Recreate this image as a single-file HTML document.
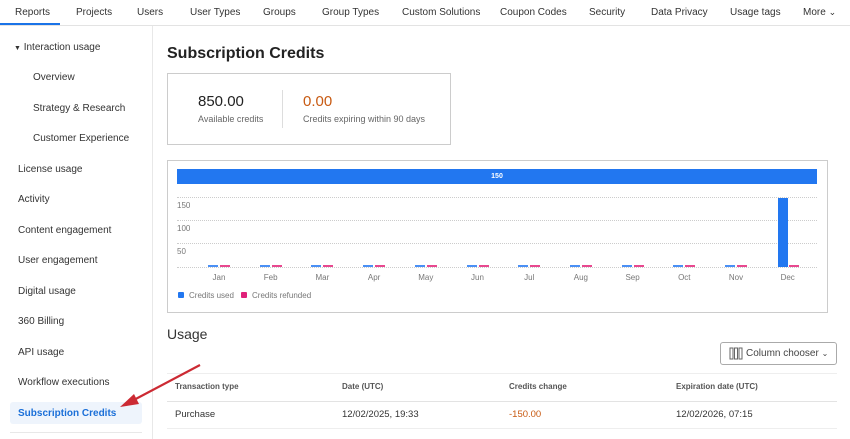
<!DOCTYPE html>
<html><head><style>
*{margin:0;padding:0;box-sizing:border-box}
body{width:850px;height:439px;overflow:hidden;font-family:"Liberation Sans",sans-serif;background:#fff;color:#333;position:relative}
.a{position:absolute;white-space:nowrap}
.nav{font-size:10px;color:#333;top:7px}
.side{font-size:10px;color:#333}
.m{font-size:8px;color:#777}
.dl{position:absolute;left:177px;width:640px;border-top:1px dotted #ccc}
.tb{position:absolute;height:2px;width:10px}
</style></head><body>
<div class="a" style="left:0;top:25px;width:850px;border-top:1px solid #e3e3e3"></div>
<div class="a" style="left:0;top:23px;width:60px;height:2px;background:#1a73e8"></div>
<div class="a nav" style="left:15px">Reports</div>
<div class="a nav" style="left:76px">Projects</div>
<div class="a nav" style="left:137px">Users</div>
<div class="a nav" style="left:190px">User Types</div>
<div class="a nav" style="left:263px">Groups</div>
<div class="a nav" style="left:322px">Group Types</div>
<div class="a nav" style="left:402px">Custom Solutions</div>
<div class="a nav" style="left:500px">Coupon Codes</div>
<div class="a nav" style="left:589px">Security</div>
<div class="a nav" style="left:651px">Data Privacy</div>
<div class="a nav" style="left:730px">Usage tags</div>
<div class="a nav" style="left:803px">More <span style="font-size:9px">⌄</span></div>

<div class="a" style="left:152px;top:26px;height:413px;border-left:1px solid #e8e8e8"></div>
<div class="a side" style="left:14px;top:42px"><span style="font-size:7px">▼</span> Interaction usage</div>
<div class="a side" style="left:33px;top:72px">Overview</div>
<div class="a side" style="left:33px;top:103px">Strategy &amp; Research</div>
<div class="a side" style="left:33px;top:133px">Customer Experience</div>
<div class="a side" style="left:18px;top:164px">License usage</div>
<div class="a side" style="left:18px;top:194px">Activity</div>
<div class="a side" style="left:18px;top:225px">Content engagement</div>
<div class="a side" style="left:18px;top:255px">User engagement</div>
<div class="a side" style="left:18px;top:286px">Digital usage</div>
<div class="a side" style="left:18px;top:316px">360 Billing</div>
<div class="a side" style="left:18px;top:347px">API usage</div>
<div class="a side" style="left:18px;top:377px">Workflow executions</div>
<div class="a" style="left:10px;top:402px;width:132px;height:22px;background:#eef4fc;border-radius:3px"></div>
<div class="a side" style="left:18px;top:408px;color:#1a6fd8;font-weight:bold">Subscription Credits</div>
<div class="a" style="left:10px;top:432px;width:132px;border-top:1px solid #e8e8e8"></div>

<div class="a" style="left:167px;top:45px;font-size:16px;font-weight:bold;color:#222">Subscription Credits</div>
<div class="a" style="left:167px;top:73px;width:284px;height:72px;border:1px solid #ccc"></div>
<div class="a" style="left:198px;top:93px;font-size:15px;color:#222">850.00</div>
<div class="a" style="left:198px;top:114px;font-size:9px;color:#666">Available credits</div>
<div class="a" style="left:282px;top:90px;height:38px;border-left:1px solid #ddd"></div>
<div class="a" style="left:303px;top:93px;font-size:15px;color:#c85a12">0.00</div>
<div class="a" style="left:303px;top:114px;font-size:9px;color:#666">Credits expiring within 90 days</div>

<div class="a" style="left:167px;top:160px;width:661px;height:153px;border:1px solid #ccc"></div>
<div class="a" style="left:177px;top:169px;width:640px;height:15px;background:#2277f0;color:#fff;font-size:7px;font-weight:bold;text-align:center;line-height:15px;padding-left:0">150</div>
<div class="dl" style="top:197px"></div><div class="dl" style="top:220px"></div><div class="dl" style="top:243px"></div><div class="dl" style="top:267px"></div>
<div class="a m" style="left:177px;top:201px">150</div>
<div class="a m" style="left:177px;top:224px">100</div>
<div class="a m" style="left:177px;top:247px">50</div>
<div class="a" style="left:778px;top:198px;width:10px;height:69px;background:#2277f0"></div>
<div id="bars"></div>
<div class="a" style="left:178px;top:292px;width:6px;height:6px;background:#2277f0;border-radius:1px"></div>
<div class="a m" style="left:189px;top:291px">Credits used</div>
<div class="a" style="left:241px;top:292px;width:6px;height:6px;background:#e0217a;border-radius:1px"></div>
<div class="a m" style="left:252px;top:291px">Credits refunded</div>

<div class="a" style="left:167px;top:326px;font-size:14px;color:#333">Usage</div>
<div class="a" style="left:720px;top:342px;width:117px;height:23px;border:1px solid #aaa;border-radius:3px;font-size:10px;color:#444;line-height:21px;padding-left:25px">Column chooser <span style="font-size:8px">⌄</span></div>
<svg class="a" style="left:729px;top:347px" width="14" height="13" viewBox="0 0 14 13"><rect x="1" y="1" width="3" height="11" fill="none" stroke="#666"/><rect x="5.5" y="1" width="3" height="11" fill="none" stroke="#666"/><rect x="10" y="1" width="3" height="11" fill="none" stroke="#666"/></svg>
<div class="a" style="left:167px;top:373px;width:670px;border-top:1px solid #eee"></div>
<div class="a" style="left:167px;top:401px;width:670px;border-top:1px solid #e3e3e3"></div>
<div class="a" style="left:167px;top:428px;width:670px;border-top:1px solid #eee"></div>
<div class="a" style="left:175px;top:382px;font-size:8px;font-weight:bold;color:#555">Transaction type</div>
<div class="a" style="left:342px;top:382px;font-size:8px;font-weight:bold;color:#555">Date (UTC)</div>
<div class="a" style="left:509px;top:382px;font-size:8px;font-weight:bold;color:#555">Credits change</div>
<div class="a" style="left:676px;top:382px;font-size:8px;font-weight:bold;color:#555">Expiration date (UTC)</div>
<div class="a" style="left:175px;top:409px;font-size:9.5px;color:#333">Purchase</div>
<div class="a" style="left:342px;top:409px;font-size:9.5px;color:#333">12/02/2025, 19:33</div>
<div class="a" style="left:509px;top:409px;font-size:9.5px;color:#c85a12">-150.00</div>
<div class="a" style="left:676px;top:409px;font-size:9.5px;color:#333">12/02/2026, 07:15</div>

<svg class="a" style="left:110px;top:360px" width="100" height="55" viewBox="0 0 100 55"><line x1="90" y1="5" x2="20" y2="42" stroke="#cc2a33" stroke-width="2.2"/><polygon points="10,47 24,34 29,44" fill="#cc2a33"/></svg>

<script>
var h='',mo=['Jan','Feb','Mar','Apr','May','Jun','Jul','Aug','Sep','Oct','Nov','Dec'];
for(var i=0;i<12;i++){var c=219+i*51.7;
if(i<11)h+='<div class="tb" style="left:'+(c-11)+'px;top:265px;background:#4a90f5"></div>';
h+='<div class="tb" style="left:'+(c+1)+'px;top:265px;background:#e8488f"></div>';
h+='<div class="a m" style="left:'+(c-15)+'px;width:30px;text-align:center;top:273px">'+mo[i]+'</div>';}
document.getElementById('bars').innerHTML=h;
</script>
</body></html>
